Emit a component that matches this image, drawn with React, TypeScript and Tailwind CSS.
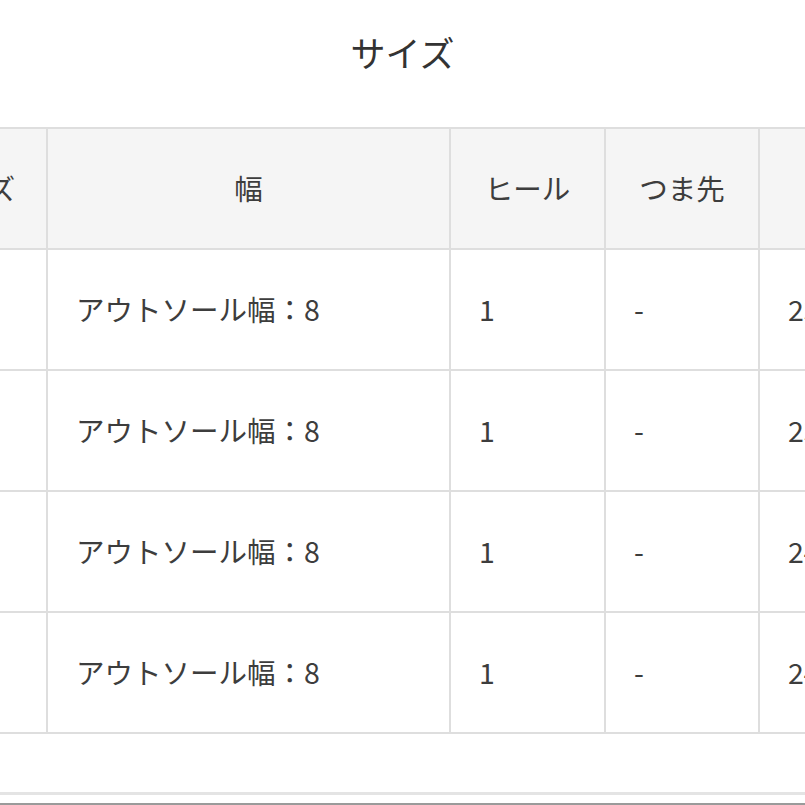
const headers = ["サイズ", "幅", "ヒール", "つま先", "長さ"];

const rows = [
  ["22.5", "アウトソール幅：8", "1", "-", "23"],
  ["23", "アウトソール幅：8", "1", "-", "23"],
  ["23.5", "アウトソール幅：8", "1", "-", "24"],
  ["24", "アウトソール幅：8", "1", "-", "24"],
];

export default function App() {
  return (
    <div
      className="w-[805px] h-[805px] overflow-hidden bg-white text-[#3d3d3d]"
      style={{ fontFamily: '"Noto Sans CJK JP", "Noto Sans", sans-serif' }}
    >
      <h1 className="pt-[30px] h-[127px] text-center text-[35px] leading-[44px] text-[#333]">
        サイズ
      </h1>

      {/* table is wider than the viewport; left and right columns are cut off */}
      <table className="ml-[-102px] table-fixed border-collapse w-[1016px]">
        <colgroup>
          <col className="w-[148px]" />
          <col className="w-[403px]" />
          <col className="w-[155px]" />
          <col className="w-[154px]" />
          <col className="w-[156px]" />
        </colgroup>
        <thead>
          <tr>
            {headers.map((h) => (
              <th
                key={h}
                className="h-[121px] border-2 border-[#dedede] bg-[#f5f5f5] text-center text-[28.5px] font-normal"
              >
                {h}
              </th>
            ))}
          </tr>
        </thead>
        <tbody>
          {rows.map((row, i) => (
            <tr key={i}>
              {row.map((cell, j) => (
                <td
                  key={j}
                  className="h-[121px] border-2 border-[#dedede] pl-[28px] text-left text-[28.5px] whitespace-nowrap"
                >
                  {cell}
                </td>
              ))}
            </tr>
          ))}
        </tbody>
      </table>

      <div className="mt-[58px] h-[3px] bg-[#e4e4e4]" />
      <div className="mt-[8px] h-[2px] bg-[#9a9a9a]" />
    </div>
  );
}
